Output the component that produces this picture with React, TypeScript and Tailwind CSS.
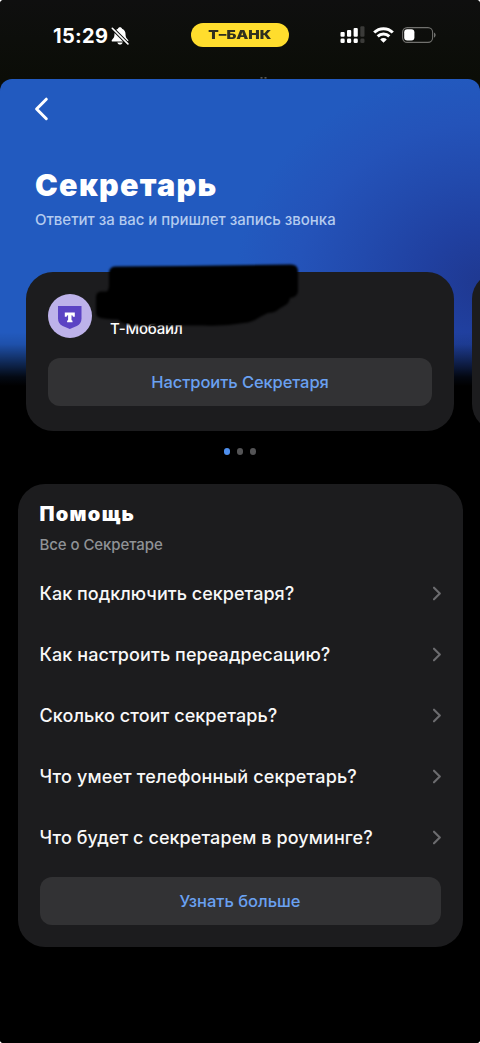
import type { ReactNode } from 'react';

const QUESTIONS = [
  { text: 'Как подключить секретаря?', tracking: 'tracking-[0.030px]' },
  { text: 'Как настроить переадресацию?', tracking: 'tracking-[0.080px]' },
  { text: 'Сколько стоит секретарь?', tracking: 'tracking-[0.080px]' },
  { text: 'Что умеет телефонный секретарь?', tracking: 'tracking-[0.140px]' },
  { text: 'Что будет с секретарем в роуминге?', tracking: 'tracking-[0.080px]' },
];

function BellOffIcon() {
  return (
    <svg className="ml-[3px] h-[18px] w-[18px]" viewBox="0 0 18 18">
      <path
        d="M9 .3c-1.100 0-1.800.6-2 1.400C4.900 2.500 3.500 4.300 3.500 6.800c0 3.400-.9 4.500-2.400 5.900-.9.9-.5 1.900.6 1.900h14.600c1.100 0 1.500-1 .6-1.900-1.500-1.400-2.400-2.500-2.400-5.900 0-2.500-1.400-4.300-3.500-5.100C10.800.9 10.100.3 9 .3z"
        fill="white"
      />
      <path d="M6.300 15.500h5.400c-.3 1.300-1.400 2.100-2.700 2.100s-2.400-.8-2.700-2.100z" fill="white" />
      <path d="M1 1 17.500 17.500" stroke="#0c0d0b" strokeWidth="3.600" />
      <path d="M1.300 1.300 16.900 16.900" stroke="white" strokeWidth="1.600" strokeLinecap="round" />
    </svg>
  );
}

function SignalIcon() {
  return (
    <svg className="h-[18px] w-[25px]" viewBox="0 0 25 18">
      <g fill="white">
        <rect x="0.500" y="6" width="4.200" height="4.800" rx="1.100" />
        <rect x="7" y="4" width="4.200" height="6.800" rx="1.100" />
        <rect x="13.600" y="2" width="4.200" height="8.800" rx="1.100" />
        <rect x="0.500" y="12.600" width="4.200" height="4.400" rx="1.300" />
        <rect x="7" y="12.600" width="4.200" height="4.400" rx="1.300" />
        <rect x="13.600" y="12.600" width="4.200" height="4.400" rx="1.300" />
      </g>
      <g fill="#3b3b39">
        <rect x="20.300" y="0.300" width="4.200" height="10.500" rx="1.100" />
        <rect x="20.300" y="12.600" width="4.200" height="4.400" rx="1.300" />
      </g>
    </svg>
  );
}

function WifiIcon() {
  return (
    <svg className="h-4 w-[21px]" viewBox="0 0 21 16" fill="none" stroke="white" strokeWidth="3">
      <path d="M1.200 5.500a13.200 13.200 0 0 1 18.600 0" />
      <path d="M4.700 9.400a8.200 8.200 0 0 1 11.600 0" />
      <path d="M10.500 15.700 7.200 12.400a4.600 4.600 0 0 1 6.600 0z" fill="white" stroke="none" />
    </svg>
  );
}

function BatteryIcon() {
  return (
    <svg className="h-4 w-[34px]" viewBox="0 0 34 16">
      <rect x="0.600" y="0.600" width="30" height="14.800" rx="4.600" fill="none" stroke="#71716e" strokeWidth="1.100" />
      <rect x="2.200" y="2.300" width="10.200" height="11.300" rx="3" fill="white" />
      <path d="M32 5.400c1.100.5 1.600 1.500 1.600 2.600S33.100 10.100 32 10.600z" fill="#71716e" />
    </svg>
  );
}

function StatusBar() {
  return (
    <header className="relative flex h-[78.500px] items-start bg-linear-to-b from-[#0f0f0f] to-[#0b0d07]">
      <div className="flex h-[71px] w-[191px] items-center pl-[53px]">
        <span className="text-[20px] font-bold leading-none tracking-[0.300px] text-white">15:29</span>
        <BellOffIcon />
      </div>
      <div className="mt-[23px] flex h-6 w-[97.500px] items-center justify-center rounded-full bg-[#ffdd2d]">
        <span className="scale-x-[1.270] text-[12px] font-black leading-none text-[#30301f]">Т–БАНК</span>
      </div>
      <div className="flex h-[70px] flex-1 items-center pl-[51.500px]">
        <SignalIcon />
        <span className="w-2" />
        <WifiIcon />
        <span className="w-2" />
        <BatteryIcon />
      </div>
      <svg className="absolute left-[260px] top-[77px] h-0.5 w-2" viewBox="0 0 8 2">
        <path d="M.5.300h2v1.200h-2zM4.500.3h2v1.200h-2z" fill="#73736f" />
      </svg>
    </header>
  );
}

function MobileLogo() {
  return (
    <svg className="h-11 w-11" viewBox="0 0 44 44">
      <circle cx="22" cy="22" r="22" fill="#bdb2ea" />
      <path d="M10 12h23.500v12.200c0 4-1.700 6.200-4.700 7.900L21.800 35l-7.100-2.900c-3-1.700-4.700-3.900-4.700-7.900z" fill="#5b43c4" />
      <path d="M16.800 18.600h10v4.200h-1.900c0-1-.4-1.500-1.400-1.500v4.300c0 .8.300 1.100 1 1.100v1.500h-5.400v-1.500c.7 0 1-.3 1-1.100v-4.300c-1 0-1.400.5-1.400 1.500h-1.900z" fill="white" />
    </svg>
  );
}

function Scribble() {
  return (
    <svg className="absolute left-[58px] top-[-11px] h-[70px] w-[220px] blur-[0.800px]" viewBox="0 0 220 70">
      <path
        d="M31 5.500 100 5 207 3.500q6.500 0 7 6v20q0 5-5 7l-3 .5q-1 6-6 8l-5 3q-4 4-11 4l-8 4q-7 5-16 6-20 3.500-40 2.500H60q-12 1-20-2-4-1-6-4-11 0-19-2-3-1-3-5V36q0-5 5-5.500h6Q25 28 25 25V12q0-6 6-6.500z"
        fill="black"
      />
    </svg>
  );
}

function ActionButton({ children }: { children: ReactNode }) {
  return (
    <button className="flex h-12 w-full items-center justify-center rounded-[12px] bg-[#323234] text-[16.500px] font-medium text-[#6aa1f1]">
      {children}
    </button>
  );
}

function NumberCard() {
  return (
    <article className="relative h-[159px] w-[427.500px] shrink-0 rounded-[27px] bg-[#1c1c1e] px-[21.700px] pt-[21.500px]">
      <div className="flex h-11">
        <MobileLogo />
        <p className="ml-[18px] mt-[25px] text-[15px] font-medium leading-5 tracking-[-0.150px] text-white">Т-Мобайл</p>
      </div>
      <div className="mt-5">
        <ActionButton>
          <span className="pt-px tracking-[-0.080px]">Настроить Секретаря</span>
        </ActionButton>
      </div>
      <Scribble />
    </article>
  );
}

function Help() {
  return (
    <section className="mx-[17.500px] mt-[29.500px] h-[462.500px] rounded-[27px] bg-[#1c1c1e] px-[22px] pt-[18px]">
      <h2 className="text-[20px] font-black leading-6 tracking-[1.300px] text-white">Помощь</h2>
      <p className="mt-[9px] text-[15px] font-medium leading-5 tracking-[-0.080px] text-[#8f9296]">Все о Секретаре</p>
      <ul className="mt-2">
        {QUESTIONS.map((question) => (
          <li key={question.text} className="flex h-[61px] items-center justify-between">
            <span className={`text-[18px] font-medium text-[#f8f8f8] ${question.tracking}`}>{question.text}</span>
            <svg className="h-[15px] w-2" viewBox="0 0 8 15" fill="none" stroke="#6c6c6f" strokeWidth="2.100">
              <path d="M1 1.700 6.800 7.500 1 13.300" strokeLinecap="round" strokeLinejoin="round" />
            </svg>
          </li>
        ))}
      </ul>
      <div className="mt-[9px]">
        <ActionButton>
          <span>Узнать больше</span>
        </ActionButton>
      </div>
    </section>
  );
}

export default function App() {
  return (
    <div className="bg-white font-['Inter',sans-serif]">
      <div className="h-[1043px] w-[480px] overflow-hidden rounded-[4px] bg-black">
        <StatusBar />
        <div className="bg-[#0b0d07]">
          <main
            className="h-[965px] overflow-hidden rounded-t-[12px] bg-black bg-[linear-gradient(to_bottom,transparent_253px,rgba(0,0,0,0.100)_265px,rgba(0,0,0,0.900)_298px,black_307px),radial-gradient(ellipse_250px_215px_at_485px_205px,#1f3890_0%,#2040a0_25%,#224aad_50%,#2453b9_75%,#225abf_100%)]"
          >
            <svg className="ml-[34px] mt-[18px] h-6 w-[15px]" viewBox="0 0 15 24" fill="none" stroke="white" strokeWidth="3">
              <path d="M12.300 2.200 2.600 12l9.700 9.700" strokeLinecap="round" strokeLinejoin="round" />
            </svg>
            <h1 className="ml-[35px] mt-[46px] text-[30.500px] font-black leading-9 tracking-[1.300px] text-white">Секретарь</h1>
            <p className="ml-[35px] mt-[7px] text-[15px] font-medium leading-5 tracking-[-0.020px] text-[#b4cbef]">
              Ответит за вас и пришлет запись звонка
            </p>
            <div className="ml-[26.300px] mt-[42.500px] flex gap-[18px]">
              <NumberCard />
              <div className="h-[159px] w-[427px] shrink-0 rounded-[27px] bg-[#1c1c1e]" />
            </div>
            <div className="mt-[17px] flex justify-center gap-[6.500px]">
              <span className="size-[6.500px] rounded-full bg-[#4f8fed]" />
              <span className="size-[6.500px] rounded-full bg-[#545456]" />
              <span className="size-[6.500px] rounded-full bg-[#545456]" />
            </div>
            <Help />
          </main>
        </div>
      </div>
    </div>
  );
}
